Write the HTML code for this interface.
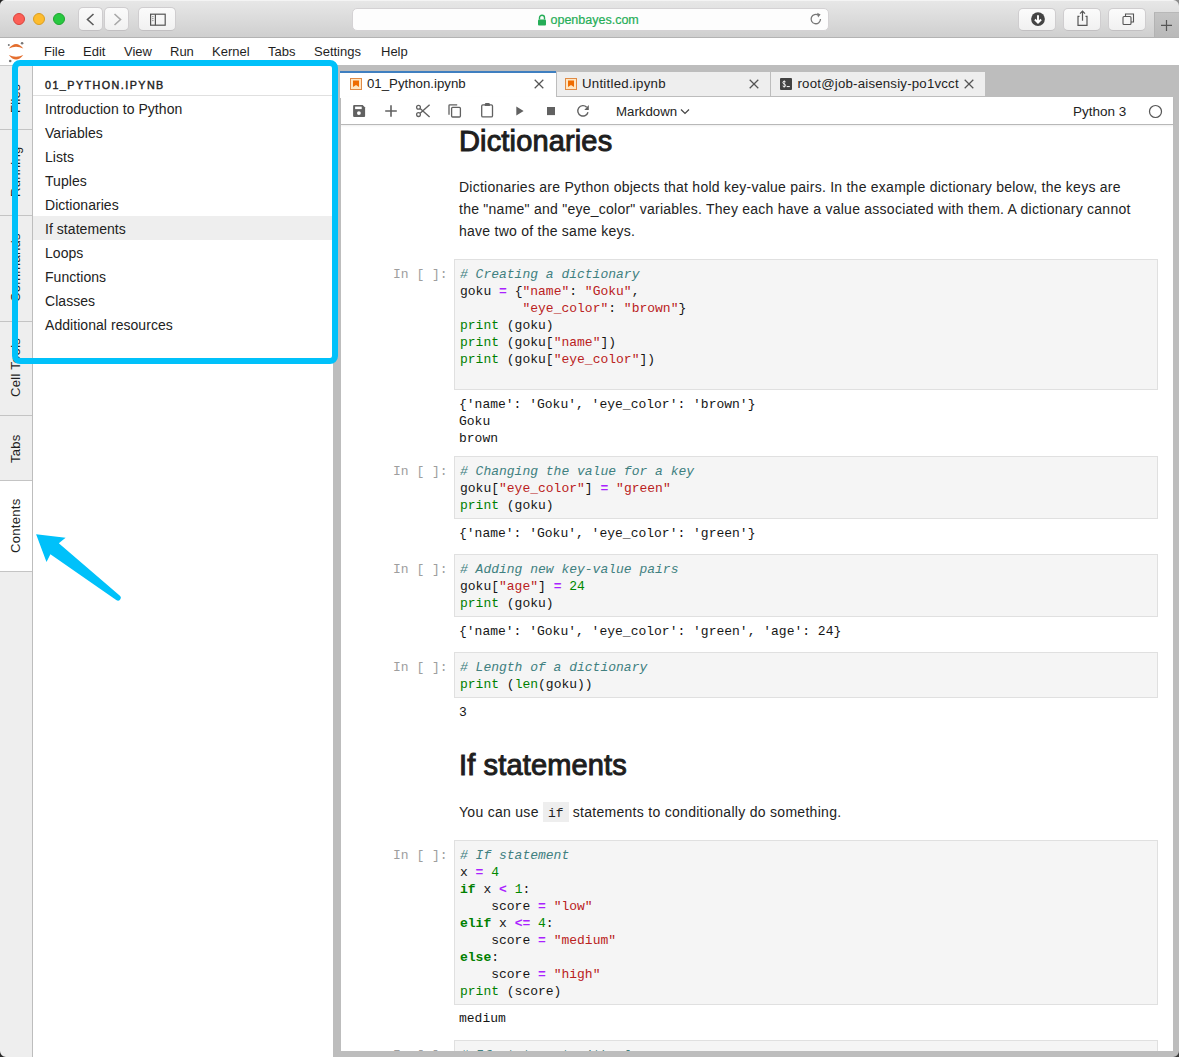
<!DOCTYPE html>
<html><head><meta charset="utf-8">
<style>
*{box-sizing:border-box;margin:0;padding:0}
html,body{width:1179px;height:1057px;overflow:hidden;background:#fff}
body{position:relative;font-family:"Liberation Sans",sans-serif;color:#222}
.a{position:absolute}
/* safari */
#saf{left:0;top:0;width:1179px;height:38px;background:linear-gradient(#e7e7e7,#cfcfcf);border-bottom:1px solid #b3b3b3;border-top:1px solid #f4f4f4}
.tl{width:12px;height:12px;border-radius:50%;top:13px}
.sbtn{background:linear-gradient(#fbfbfb,#f1f1f1);border:1px solid #cfcdcf;border-radius:5px;border-bottom-color:#c2c0c2}
/* menubar */
#menu{left:0;top:38px;width:1179px;height:28px;background:#fff;border-bottom:1px solid #c9c9c9}
.mi{top:44px;font-size:13px;line-height:15px;color:#1f1f1f}
/* left strip */
#strip{left:0;top:66px;width:33px;height:991px;background:#eeeeee;border-right:1px solid #bdbdbd}
.vt{position:absolute;left:0;width:32px;border-bottom:1px solid #c4c4c4}
.vt span{position:absolute;left:8px;font-size:13px;letter-spacing:0.3px;line-height:15px;color:#1f1f1f;white-space:nowrap;transform-origin:0 0;transform:rotate(-90deg)}
/* sidebar */
#side{left:33px;top:66px;width:300px;height:991px;background:#fff}
.toc{position:absolute;left:12px;font-size:14px;line-height:16px;color:#222;letter-spacing:0.05px;margin-top:0.5px}
/* main */
#main{left:333px;top:65px;width:846px;height:992px;background:#bdbdbd}
.tab{position:absolute;top:6px;height:26px;background:#eeeeee;border:1px solid #bdbdbd}
.tab .t{position:absolute;top:4px;left:25px;font-size:13.25px;line-height:16px;color:#222;white-space:nowrap}
#nb{left:341px;top:97px;width:832px;height:954px;background:#fff;overflow:hidden}
.mono{font-family:"Liberation Mono",monospace;font-size:13px;line-height:17px;white-space:pre;color:#151515}
.cell{position:absolute;left:113px;width:704px;background:#f5f5f5;border:1px solid #e0e0e0;padding:6px 0 0 5px}
.pr{position:absolute;left:52px;color:#9e9e9e}
.out{position:absolute;left:118px}
.c{color:#408080;font-style:italic}
.s{color:#ba2121}
.o{color:#aa22ff;font-weight:bold}
.k{color:#008000}
.kb{color:#008000;font-weight:bold}
.n{color:#008800}
.h1{position:absolute;left:118px;font-size:29px;line-height:34px;font-weight:normal;-webkit-text-stroke:1px #1e1e1e;color:#1e1e1e;white-space:nowrap;letter-spacing:0.15px}
.ic{font-family:"Liberation Mono",monospace;font-size:13px;background:#eeeeee;padding:4px 5px 1px 5px;letter-spacing:0}
.p{position:absolute;left:118px;font-size:14px;line-height:22px;letter-spacing:0.25px;color:#222;white-space:nowrap}
</style></head><body>

<!-- Safari toolbar -->
<div id="saf" class="a"></div>
<div class="a tl" style="left:13px;background:#fc5f57;border:1px solid #d8443d"></div>
<div class="a tl" style="left:33px;background:#fdbc2e;border:1px solid #d99e22"></div>
<div class="a tl" style="left:53px;background:#28c840;border:1px solid #1ea52f"></div>
<div class="a sbtn" style="left:78px;top:7px;width:25px;height:23.5px"></div>
<div class="a sbtn" style="left:104px;top:7px;width:25px;height:23.5px"></div>
<svg class="a" style="left:78px;top:7.5px" width="52" height="23"><path d="M15.5 6 L9.5 11.5 L15.5 17" fill="none" stroke="#5a5a5a" stroke-width="1.6"/><path d="M36.5 6 L42.5 11.5 L36.5 17" fill="none" stroke="#a8a8a8" stroke-width="1.6"/></svg>
<div class="a sbtn" style="left:138px;top:7px;width:38px;height:23.5px"></div>
<svg class="a" style="left:138.5px;top:7.5px" width="37" height="23"><rect x="11.6" y="6.2" width="14.6" height="11" fill="none" stroke="#555" stroke-width="1.2"/><line x1="16.4" y1="6.2" x2="16.4" y2="17.2" stroke="#555" stroke-width="1.2"/><circle cx="13.9" cy="8.6" r="0.6" fill="#666"/><circle cx="13.9" cy="10.6" r="0.6" fill="#666"/><circle cx="13.9" cy="12.6" r="0.6" fill="#666"/></svg>
<div class="a" style="left:352px;top:8px;width:477px;height:23px;background:#fdfdfd;border:1px solid #d4d2d4;border-radius:5px"></div>
<svg class="a" style="left:537px;top:14px" width="10" height="12"><path d="M2.5 5.5 V3.8 A2.5 2.5 0 0 1 7.5 3.8 V5.5" fill="none" stroke="#25ad57" stroke-width="1.4"/><rect x="1" y="5.5" width="8" height="6" rx="1" fill="#25ad57"/></svg>
<div class="a" style="left:550.5px;top:13px;font-size:12.5px;line-height:15px;color:#25ad57;-webkit-text-stroke:0.2px #25ad57">openbayes.com</div>
<svg class="a" style="left:808px;top:11px" width="16" height="16"><path d="M12.5 8 A4.7 4.7 0 1 1 10.5 4.2" fill="none" stroke="#777" stroke-width="1.3"/><path d="M9.2 1.8 L12.6 3.6 L10 6.6 Z" fill="#777"/></svg>
<div class="a sbtn" style="left:1018px;top:8px;width:38px;height:23px"></div>
<div class="a sbtn" style="left:1063px;top:8px;width:38px;height:23px"></div>
<div class="a sbtn" style="left:1108px;top:8px;width:38px;height:23px"></div>
<svg class="a" style="left:1019px;top:8px" width="37" height="23"><circle cx="19" cy="11.1" r="6.9" fill="#444"/><path d="M19 7.2 V14.2 M15.9 11.5 L19 14.6 L22.1 11.5" fill="none" stroke="#fff" stroke-width="1.9"/></svg>
<svg class="a" style="left:1064px;top:8px" width="37" height="23"><path d="M15.5 8.3 H14 V17.3 H23 V8.3 H21.5" fill="none" stroke="#555" stroke-width="1.2"/><path d="M18.5 12.8 V3.2 M16 5.7 L18.5 3.2 L21 5.7" fill="none" stroke="#555" stroke-width="1.2"/></svg>
<svg class="a" style="left:1109px;top:8px" width="37" height="23"><rect x="14" y="8.5" width="8" height="8" rx="1" fill="none" stroke="#555" stroke-width="1.1"/><path d="M16.5 8.5 V6 H24.5 V14 H22" fill="none" stroke="#555" stroke-width="1.1"/></svg>
<div class="a" style="left:1154px;top:12px;width:25px;height:25px;background:linear-gradient(#c4c4c4,#b9b9b9);border-left:1px solid #b3b3b3;border-top:1px solid #b8b8b8"></div>
<svg class="a" style="left:1154px;top:12px" width="25" height="26"><path d="M12.5 7.9 V18.9 M7 13.4 H18" stroke="#555" stroke-width="1.2"/></svg>

<!-- Menu bar -->
<div id="menu" class="a"></div>
<svg class="a" style="left:0;top:38px" width="33" height="27"><path d="M8.8 10.5 Q16 1.5 23.3 10.5 Q16 7.1 8.8 10.5Z" fill="#e46e2e"/><path d="M8.8 17.1 Q16 26.1 23.3 17.1 Q16 20.5 8.8 17.1Z" fill="#e46e2e"/><circle cx="22.1" cy="5.2" r="1.3" fill="#767677"/><circle cx="8.8" cy="6.9" r="1" fill="#767677"/><circle cx="10.2" cy="23" r="1.3" fill="#767677"/></svg>
<div class="a mi" style="left:44px">File</div>
<div class="a mi" style="left:83px">Edit</div>
<div class="a mi" style="left:124px">View</div>
<div class="a mi" style="left:170px">Run</div>
<div class="a mi" style="left:212px">Kernel</div>
<div class="a mi" style="left:268px">Tabs</div>
<div class="a mi" style="left:314px">Settings</div>
<div class="a mi" style="left:381px">Help</div>

<!-- Left strip -->
<div id="strip" class="a"></div>
<div class="vt" style="top:66px;height:64px"><span style="top:47px">Files</span></div>
<div class="vt" style="top:130px;height:86px"><span style="top:67px">Running</span></div>
<div class="vt" style="top:216px;height:106px"><span style="top:86px">Commands</span></div>
<div class="vt" style="top:322px;height:94px"><span style="top:75px">Cell Tools</span></div>
<div class="vt" style="top:416px;height:65px"><span style="top:47px">Tabs</span></div>
<div class="vt" style="top:481px;height:91px;background:#fff;width:32px"><span style="top:72px">Contents</span></div>

<!-- Sidebar -->
<div id="side" class="a">
<div class="a" style="left:12px;top:12px;font-size:10.75px;line-height:14px;font-weight:normal;-webkit-text-stroke:0.4px #222;letter-spacing:1.45px;color:#222">01_PYTHON.IPYNB</div>
<div class="a" style="left:0;top:29px;width:300px;height:1px;background:#e0e0e0"></div>
<div class="a" style="left:0;top:150px;width:300px;height:24px;background:#eeeeee"></div>
<div class="toc" style="top:34px">Introduction to Python</div>
<div class="toc" style="top:58px">Variables</div>
<div class="toc" style="top:82px">Lists</div>
<div class="toc" style="top:106px">Tuples</div>
<div class="toc" style="top:130px">Dictionaries</div>
<div class="toc" style="top:154px">If statements</div>
<div class="toc" style="top:178px">Loops</div>
<div class="toc" style="top:202px">Functions</div>
<div class="toc" style="top:226px">Classes</div>
<div class="toc" style="top:250px">Additional resources</div>
</div>

<!-- Main -->
<div id="main" class="a">
<div class="tab" style="left:7px;width:216px;background:#fff;border:none;border-top:2px solid #3f7fc0;top:6px;height:27px"><div class="t" style="top:3px;left:27px">01_Python.ipynb</div></div>
<div class="tab" style="left:223px;width:215px"><div class="t" style="letter-spacing:0.25px">Untitled.ipynb</div></div>
<div class="tab" style="left:437px;width:216px"><div class="t" style="letter-spacing:0.2px;left:26.5px">root@job-aisensiy-po1vcct</div></div>
</div>
<svg class="a" style="left:350px;top:78px" width="12" height="12"><rect x="0.5" y="0.5" width="11" height="11" fill="#ffe6c2" stroke="#e08a45"/><path d="M3 2.5 H9 V9 L6 7 L3 9 Z" fill="#ef6c00"/></svg>
<svg class="a" style="left:565px;top:78px" width="12" height="12"><rect x="0.5" y="0.5" width="11" height="11" fill="#ffe6c2" stroke="#e08a45"/><path d="M3 2.5 H9 V9 L6 7 L3 9 Z" fill="#ef6c00"/></svg>
<svg class="a" style="left:780px;top:78px" width="12" height="12"><rect x="0" y="0" width="12" height="12" rx="1" fill="#424242"/><path d="M5.6 3.9 Q5.1 3.3 4.2 3.3 Q2.9 3.3 2.9 4.6 Q2.9 5.6 4.2 5.9 Q5.6 6.3 5.6 7.5 Q5.6 8.7 4.2 8.7 Q3.2 8.7 2.7 8" fill="none" stroke="#fff" stroke-width="0.95"/><path d="M4.2 2.5 V9.5" stroke="#fff" stroke-width="0.8"/><path d="M6.7 8.6 H9.8" stroke="#fff" stroke-width="1"/></svg>
<svg class="a" style="left:533px;top:78px" width="12" height="12"><path d="M1.7 1.7 L10.3 10.3 M10.3 1.7 L1.7 10.3" stroke="#555" stroke-width="1.25"/></svg>
<svg class="a" style="left:748px;top:78px" width="12" height="12"><path d="M1.7 1.7 L10.3 10.3 M10.3 1.7 L1.7 10.3" stroke="#555" stroke-width="1.25"/></svg>
<svg class="a" style="left:963px;top:78px" width="12" height="12"><path d="M1.7 1.7 L10.3 10.3 M10.3 1.7 L1.7 10.3" stroke="#555" stroke-width="1.25"/></svg>
<div class="a" style="left:341px;top:97px;width:832px;height:28px;background:#fff;border-bottom:1px solid #b8b8b8;box-shadow:0 1px 2px rgba(0,0,0,0.07);z-index:2"></div>
<div id="tbar" class="a" style="left:341px;top:98px;width:832px;height:28px;z-index:3">
<svg class="a" style="left:10px;top:5px" width="16" height="16" viewBox="351 103 16 16"><path d="M353.1 106 Q353.1 105 354.1 105 H362.6 L365.1 107.5 V116 Q365.1 117 364.1 117 H354.1 Q353.1 117 353.1 116 Z" fill="#616161"/><rect x="355.1" y="106.6" width="6.6" height="2.5" fill="#fff"/><circle cx="358.9" cy="113.1" r="1.9" fill="#fff"/></svg>
<svg class="a" style="left:42px;top:5px" width="16" height="16" viewBox="383 103 16 16"><path d="M385.2 111 H396.8 M391 105.2 V116.8" stroke="#616161" stroke-width="1.6"/></svg>
<svg class="a" style="left:73px;top:4px" width="18" height="18" viewBox="414 102 18 18"><circle cx="418.5" cy="107.2" r="1.9" fill="none" stroke="#616161" stroke-width="1.3"/><circle cx="418.5" cy="114.6" r="1.9" fill="none" stroke="#616161" stroke-width="1.3"/><path d="M420.1 108.6 L429.6 117.1 M420.1 113.2 L429.6 104.8" stroke="#616161" stroke-width="1.4"/></svg>
<svg class="a" style="left:105px;top:4px" width="17" height="18" viewBox="446 102 17 18"><rect x="451.6" y="107.4" width="8.8" height="9.6" rx="1" fill="none" stroke="#616161" stroke-width="1.3"/><path d="M449 114.8 V105.6 Q449 104.8 449.8 104.8 H457.2" fill="none" stroke="#616161" stroke-width="1.3"/></svg>
<svg class="a" style="left:138px;top:3px" width="16" height="18" viewBox="479 101 16 18"><rect x="481.7" y="104.9" width="10.8" height="12" rx="1.2" fill="none" stroke="#616161" stroke-width="1.3"/><path d="M484.8 106 V104.3 Q484.8 103 486.1 103 H488.6 Q489.9 103 489.9 104.3 V106 Z" fill="#616161"/></svg>
<svg class="a" style="left:173px;top:6px" width="12" height="14" viewBox="514 104 12 14"><path d="M516.3 106.6 L523.6 111 L516.3 115.4 Z" fill="#616161"/></svg>
<svg class="a" style="left:204px;top:7px" width="12" height="12" viewBox="545 105 12 12"><rect x="547" y="107" width="8" height="8.1" fill="#616161"/></svg>
<svg class="a" style="left:234px;top:4px" width="17" height="17" viewBox="575 102 17 17"><path d="M588 112.2 A5.2 5.2 0 1 1 586.7 107.2" fill="none" stroke="#616161" stroke-width="1.4"/><path d="M588.8 105.1 L588.8 109.9 L584.3 109.9 Z" fill="#616161"/></svg>
<div class="a" style="left:275px;top:6px;font-size:13.25px;line-height:16px;color:#222">Markdown</div>
<svg class="a" style="left:339px;top:10px" width="10" height="8"><path d="M1 1.5 L5 5.5 L9 1.5" fill="none" stroke="#444" stroke-width="1.2"/></svg>
<div class="a" style="left:732px;top:6px;font-size:13.5px;line-height:16px;color:#222">Python 3</div>
<svg class="a" style="left:806.5px;top:5.5px" width="15" height="15"><circle cx="7.5" cy="7.5" r="6" fill="none" stroke="#555" stroke-width="1.2"/></svg>
</div>
<div id="nb" class="a">
<div class="h1" style="top:27px">Dictionaries</div>
<div class="p" style="top:79px">Dictionaries are Python objects that hold key-value pairs. In the example dictionary below, the keys are<br>the "name" and "eye_color" variables. They each have a value associated with them. A dictionary cannot<br>have two of the same keys.</div>

<div class="pr mono" style="top:169px">In [ ]:</div>
<div class="cell mono" style="top:162px;height:131px"><span class="c"># Creating a dictionary</span>
goku <span class="o">=</span> {<span class="s">"name"</span>: <span class="s">"Goku"</span>,
        <span class="s">"eye_color"</span>: <span class="s">"brown"</span>}
<span class="k">print</span> (goku)
<span class="k">print</span> (goku[<span class="s">"name"</span>])
<span class="k">print</span> (goku[<span class="s">"eye_color"</span>])
</div>
<div class="out mono" style="top:299px">{'name': 'Goku', 'eye_color': 'brown'}
Goku
brown</div>

<div class="pr mono" style="top:366px">In [ ]:</div>
<div class="cell mono" style="top:359px;height:63px"><span class="c"># Changing the value for a key</span>
goku[<span class="s">"eye_color"</span>] <span class="o">=</span> <span class="s">"green"</span>
<span class="k">print</span> (goku)</div>
<div class="out mono" style="top:428px">{'name': 'Goku', 'eye_color': 'green'}</div>

<div class="pr mono" style="top:464px">In [ ]:</div>
<div class="cell mono" style="top:457px;height:63px"><span class="c"># Adding new key-value pairs</span>
goku[<span class="s">"age"</span>] <span class="o">=</span> <span class="n">24</span>
<span class="k">print</span> (goku)</div>
<div class="out mono" style="top:526px">{'name': 'Goku', 'eye_color': 'green', 'age': 24}</div>

<div class="pr mono" style="top:562px">In [ ]:</div>
<div class="cell mono" style="top:555px;height:46px"><span class="c"># Length of a dictionary</span>
<span class="k">print</span> (<span class="k">len</span>(goku))</div>
<div class="out mono" style="top:607px">3</div>

<div class="h1" style="top:651px">If statements</div>
<div class="p" style="top:704px;letter-spacing:0.29px">You can use <span class="ic">if</span> statements to conditionally do something.</div>

<div class="pr mono" style="top:750px">In [ ]:</div>
<div class="cell mono" style="top:743px;height:165px"><span class="c"># If statement</span>
x <span class="o">=</span> <span class="n">4</span>
<span class="kb">if</span> x <span class="o">&lt;</span> <span class="n">1</span>:
    score <span class="o">=</span> <span class="s">"low"</span>
<span class="kb">elif</span> x <span class="o">&lt;=</span> <span class="n">4</span>:
    score <span class="o">=</span> <span class="s">"medium"</span>
<span class="kb">else</span>:
    score <span class="o">=</span> <span class="s">"high"</span>
<span class="k">print</span> (score)</div>
<div class="out mono" style="top:913px">medium</div>

<div class="pr mono" style="top:950px">In [ ]:</div>
<div class="cell mono" style="top:943px;height:60px"><span class="c"># If statement with else:</span></div>
</div>

<div class="a" style="left:12px;top:60px;width:326px;height:304px;border:6px solid #00c1fa;border-radius:8px;z-index:10"></div>
<svg class="a" style="left:30px;top:525px;z-index:10" width="100" height="80" viewBox="30 525 100 80"><path d="M36.1 534.3 L65.6 537.7 L58.8 543.2 L119.6 595.6 A2.4 2.4 0 0 1 116.2 600.1 L50.4 554.3 L46.5 561.9 Z" fill="#00c1fa"/></svg>
<svg class="a" style="left:0;top:0;z-index:20" width="5" height="5"><path d="M0 0 H5 A5 5 0 0 0 0 5 Z" fill="#222"/></svg>
<svg class="a" style="left:1173px;top:0;z-index:20" width="6" height="6"><path d="M6 0 H0 A6 6 0 0 1 6 6 Z" fill="#8a8a8a"/></svg>
<svg class="a" style="left:0;top:1051px;z-index:20" width="6" height="6"><path d="M0 6 H6 A6 6 0 0 1 0 0 Z" fill="#2a2a2a"/></svg>
<svg class="a" style="left:1173px;top:1051px;z-index:20" width="6" height="6"><path d="M6 6 H0 A6 6 0 0 0 6 0 Z" fill="#3a3a3a"/></svg>
</body></html>
